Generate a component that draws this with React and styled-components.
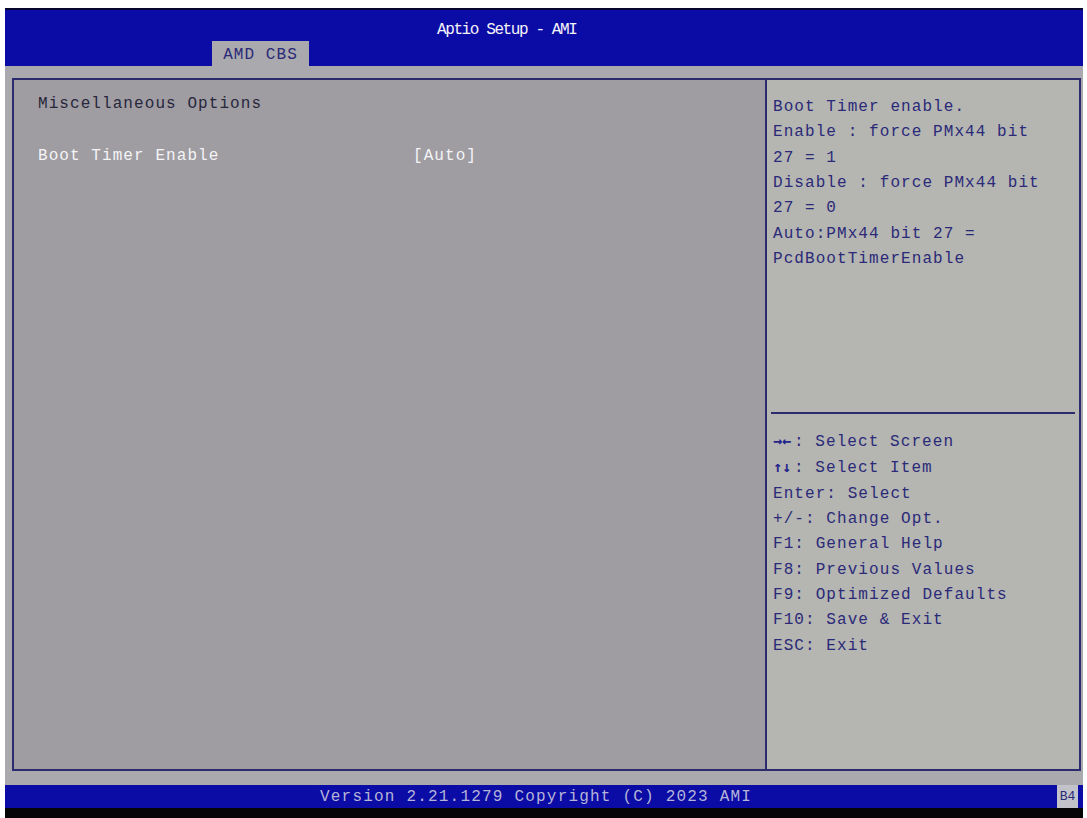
import React from 'react';
import styled, { createGlobalStyle } from 'styled-components';

const COLORS = {
  blue: '#0b0ba6',
  navy: '#2a2a78',
  border: '#2b2b6e',
  leftGray: '#9f9ca2',
  rightGray: '#b5b5b2',
  frameGray: '#aaa9ad',
  white: '#f4f4f6',
};

const GlobalStyle = createGlobalStyle`
  html, body {
    margin: 0;
    padding: 0;
    background: #ffffff;
  }
  body {
    font-family: "Liberation Mono", "DejaVu Sans Mono", monospace;
  }
`;

const HELP_LINES = [
  'Boot Timer enable.',
  'Enable : force PMx44 bit',
  '27 = 1',
  'Disable : force PMx44 bit',
  '27 = 0',
  'Auto:PMx44 bit 27 =',
  'PcdBootTimerEnable',
];

const KEY_LINES = [
  ['→←', ': Select Screen'],
  ['↑↓', ': Select Item'],
  ['', 'Enter: Select'],
  ['', '+/-: Change Opt.'],
  ['', 'F1: General Help'],
  ['', 'F8: Previous Values'],
  ['', 'F9: Optimized Defaults'],
  ['', 'F10: Save & Exit'],
  ['', 'ESC: Exit'],
];

const App = () => {
  return (
    <>
      <GlobalStyle />
      <Screen>
        <Header>
          <Title>Aptio Setup - AMI</Title>
          <Tab>AMD CBS</Tab>
        </Header>
        <Body>
          <Panel>
            <MainPane>
              <SectionTitle>Miscellaneous Options</SectionTitle>
              <OptionRow>
                <span>Boot Timer Enable</span>
                <span>[Auto]</span>
              </OptionRow>
            </MainPane>
            <SidePane>
              <HelpBlock>
                {HELP_LINES.map((line) => (
                  <TextLine key={line}>{line}</TextLine>
                ))}
              </HelpBlock>
              <Divider />
              <KeyBlock>
                {KEY_LINES.map(([arrows, text]) => (
                  <TextLine key={text}>
                    {arrows && <Arrows>{arrows}</Arrows>}
                    {text}
                  </TextLine>
                ))}
              </KeyBlock>
            </SidePane>
          </Panel>
        </Body>
        <Footer>
          <Version>Version 2.21.1279 Copyright (C) 2023 AMI</Version>
          <PostCode>B4</PostCode>
        </Footer>
      </Screen>
    </>
  );
};

const Screen = styled.div`
  margin: 8px 4px 0 5px;
  height: 810px;
  display: flex;
  flex-direction: column;
  background: ${COLORS.frameGray};
`;

const Header = styled.header`
  height: 58px;
  box-sizing: border-box;
  border-top: 2px solid #06062e;
  background: ${COLORS.blue};
  display: flex;
  flex-direction: column;
  justify-content: space-between;
`;

const Title = styled.div`
  margin-top: 10px;
  padding-left: 432px;
  line-height: 20px;
  font-size: 16px;
  letter-spacing: -1.4px;
  color: ${COLORS.white};
`;

const Tab = styled.div`
  margin-left: 207px;
  width: 97px;
  height: 25px;
  line-height: 28px;
  text-align: center;
  font-size: 16px;
  letter-spacing: 1.07px;
  color: ${COLORS.navy};
  background: ${COLORS.frameGray};
`;

const Body = styled.main`
  flex: 1;
  display: flex;
  padding: 12px 2px 14px 7px;
  min-height: 0;
`;

const Panel = styled.div`
  flex: 1;
  display: grid;
  grid-template-columns: 753px 1fr;
  border: 2px solid ${COLORS.border};
  font-size: 16px;
  letter-spacing: 1.07px;
  line-height: 25.33px;
`;

const MainPane = styled.section`
  background: ${COLORS.leftGray};
  border-right: 2px solid ${COLORS.border};
  padding: 12px 0 0 24px;
`;

const SectionTitle = styled.div`
  color: #27273c;
`;

const OptionRow = styled.div`
  display: grid;
  grid-template-columns: 375px auto;
  margin-top: 27px;
  color: ${COLORS.white};
`;

const SidePane = styled.aside`
  background: ${COLORS.rightGray};
  display: flex;
  flex-direction: column;
  color: ${COLORS.navy};
`;

const HelpBlock = styled.div`
  height: 332px;
  box-sizing: border-box;
  padding: 15px 6px 0;
`;

const Divider = styled.div`
  height: 2px;
  margin: 0 4px;
  background: ${COLORS.border};
`;

const KeyBlock = styled.div`
  padding: 15px 6px 0;
`;

const TextLine = styled.div`
  white-space: pre;
`;

const Arrows = styled.span`
  font-family: "DejaVu Sans Mono", monospace;
  font-weight: bold;
  font-size: 15px;
  letter-spacing: 0;
  display: inline-block;
  width: 21px;
  color: #23238a;
`;

const Footer = styled.footer`
  height: 23px;
  background: ${COLORS.blue};
  border-bottom: 10px solid #050508;
  display: flex;
  align-items: center;
  padding: 0 5px 0 315px;
  font-size: 16px;
  letter-spacing: 1.2px;
`;

const Version = styled.span`
  flex: 1;
  color: #b4b4d6;
`;

const PostCode = styled.span`
  align-self: stretch;
  width: 21px;
  line-height: 23px;
  text-align: center;
  font-size: 13px;
  letter-spacing: 0;
  background: #c2c2ca;
  color: ${COLORS.navy};
`;

export default App;
